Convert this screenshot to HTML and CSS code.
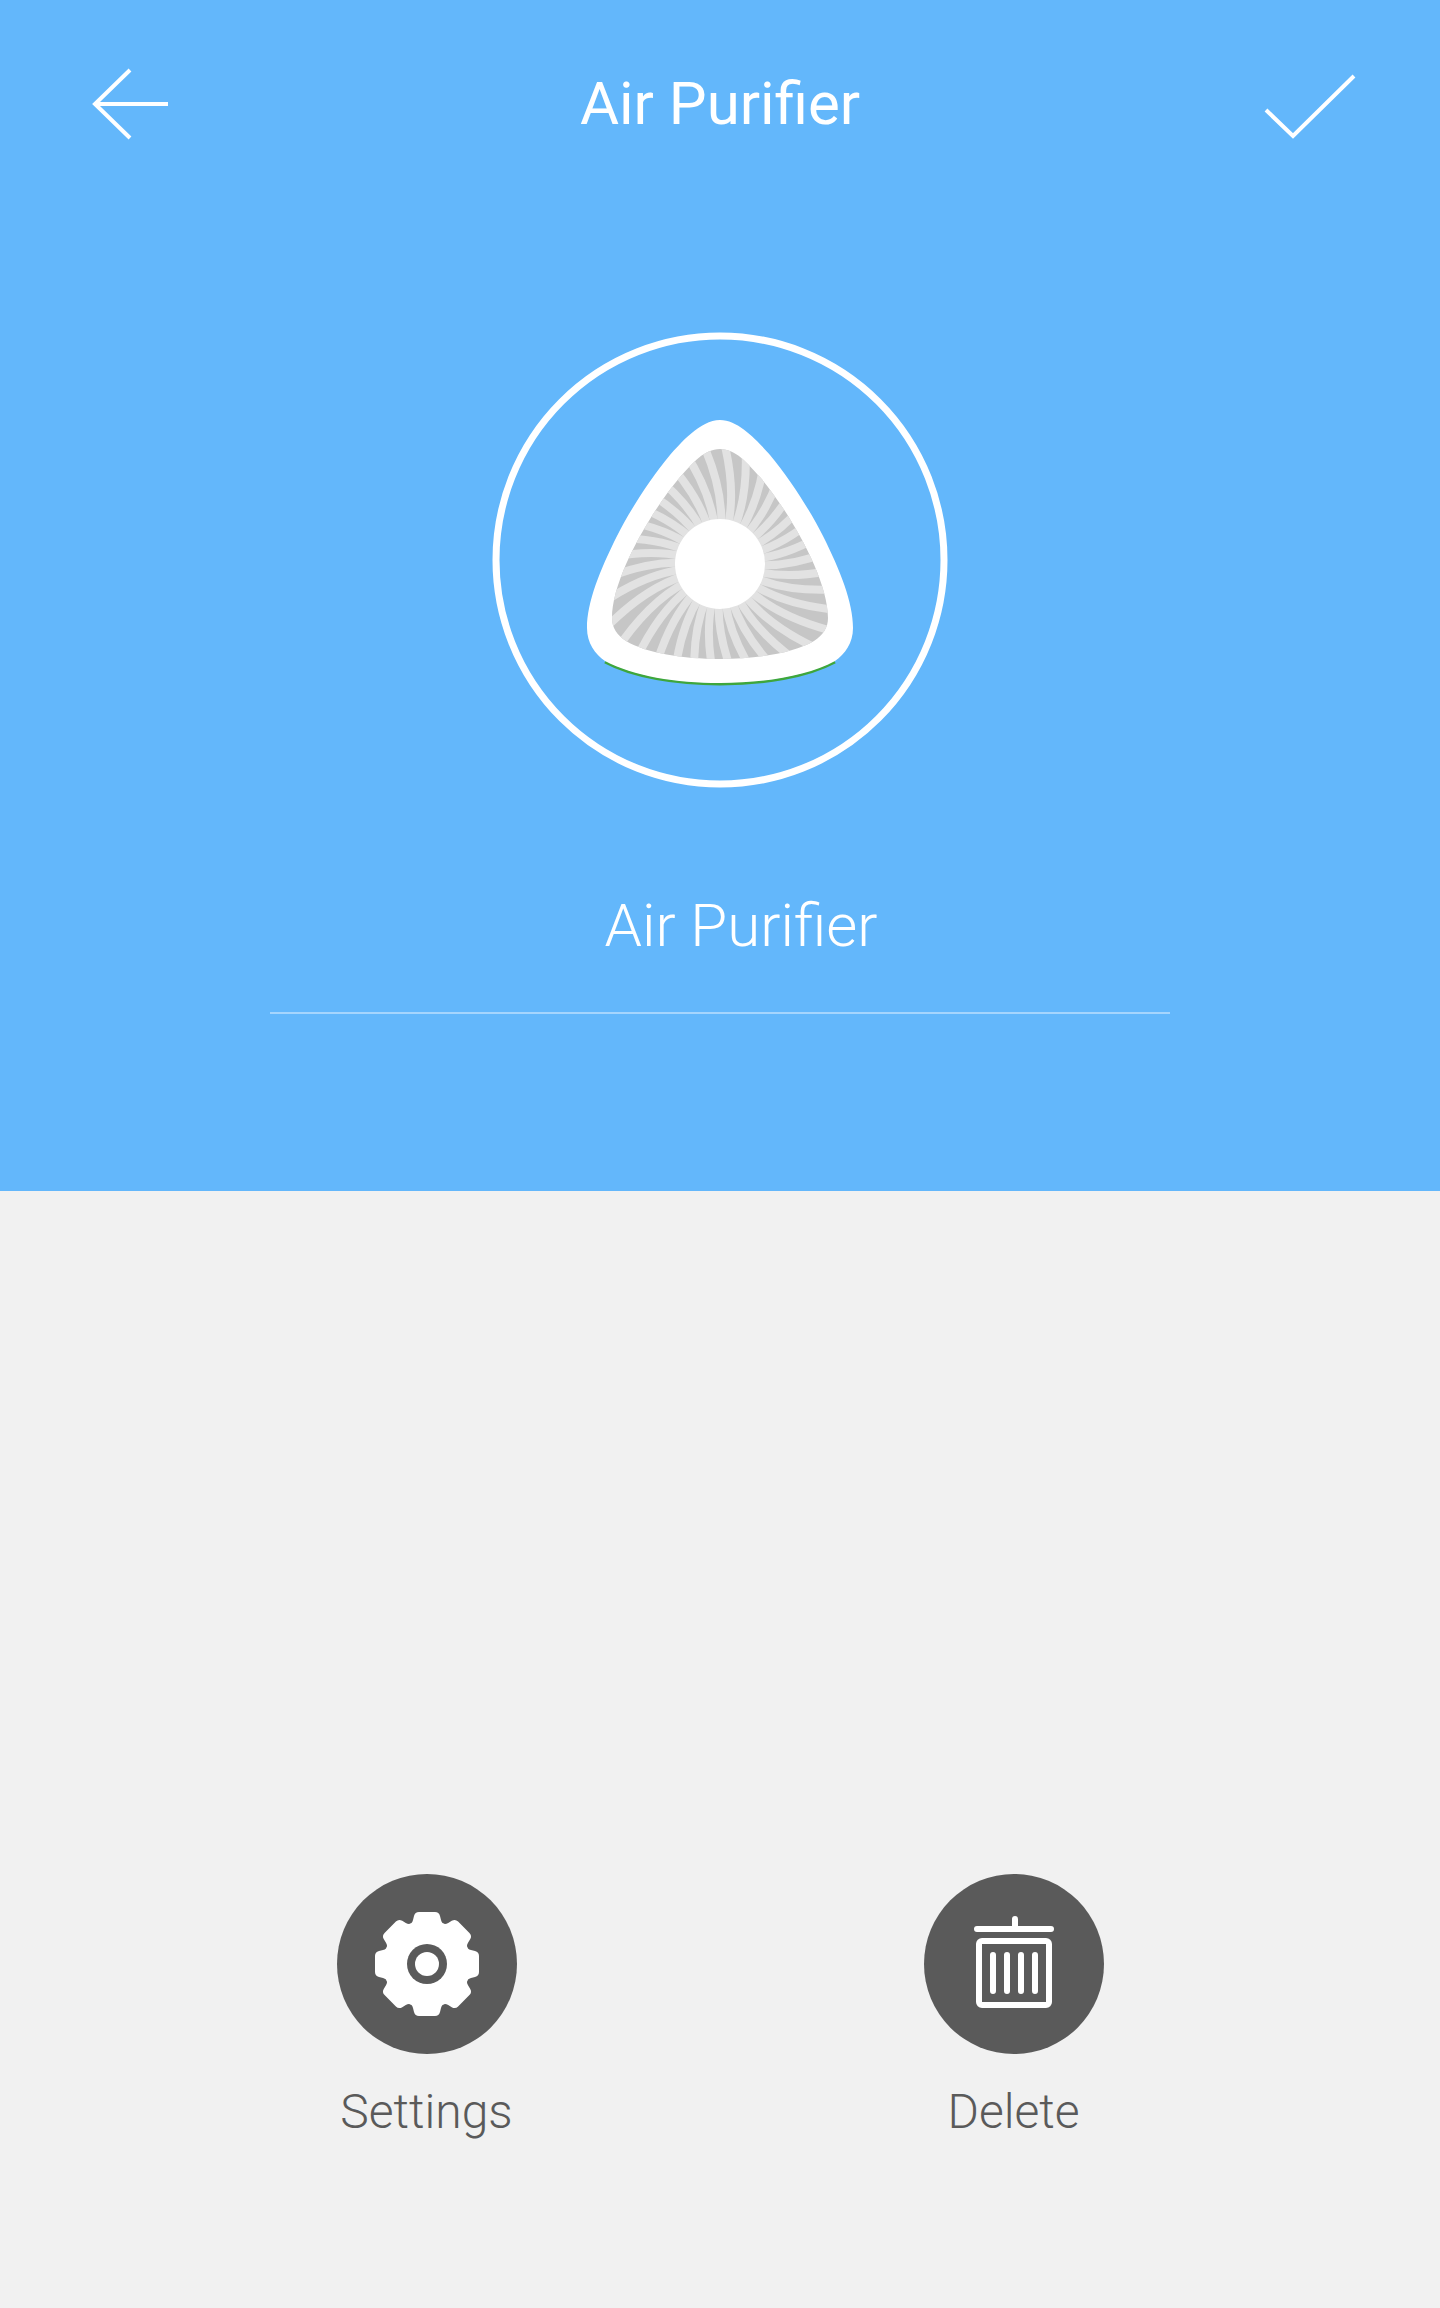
FILE: index.html
```
<!DOCTYPE html>
<html lang="en">
<head>
  <meta charset="UTF-8">
  <meta name="viewport" content="width=device-width, initial-scale=1.0">
  <title>Air Purifier</title>
  <link rel="stylesheet" href="styles.css">
</head>
<body>
  <section class="device">
    <header class="topbar">
      <button class="icon-button" type="button" aria-label="Back">
        <svg width="80" height="80" viewBox="0 0 80 80">
          <path d="M40 6 L5 40 L40 74 M5 40 H78" />
        </svg>
      </button>
      <h1>Air Purifier</h1>
      <button class="icon-button" type="button" aria-label="Save">
        <svg width="96" height="80" viewBox="0 0 96 80">
          <path d="M12 46 L39 72 L100 12" />
        </svg>
      </button>
    </header>

    <svg class="device-picture" viewBox="0 0 456 456" aria-hidden="true">
      <defs>
        <clipPath id="grille">
          <path d="M228 117 C244 117 255 131 268 145 C296 178 336 245 336 286 C336 296 331 303 322 309 C302 321 265 327 228 327 C191 327 154 321 134 309 C125 303 120 296 120 286 C120 245 160 178 188 145 C201 131 212 117 228 117 Z" />
        </clipPath>
        <path id="blade" d="M8 -38 Q17 -80 0 -137" />
        <g id="blades">
          <use href="#blade" />
          <use href="#blade" transform="rotate(10)" />
          <use href="#blade" transform="rotate(20)" />
          <use href="#blade" transform="rotate(30)" />
          <use href="#blade" transform="rotate(40)" />
          <use href="#blade" transform="rotate(50)" />
        </g>
      </defs>
      <circle class="ring" cx="228" cy="228" r="224" />
      <path class="glow" d="M113 330 C141 345 184 352 228 352 C272 352 315 345 343 330" />
      <path class="shell" d="M228 88 C248 88 268 112 278 123 C298 147 319 180 331 204 C348 238 361 270 361 296 C361 311 353 322 343 329 C315 344 272 351 228 351 C184 351 141 344 113 329 C103 322 95 311 95 296 C95 270 108 238 125 204 C137 180 158 147 178 123 C188 112 208 88 228 88 Z" />
      <g clip-path="url(#grille)">
        <rect class="grille" x="110" y="110" width="236" height="226" />
        <g class="blades" transform="translate(228 232)">
          <use href="#blades" />
          <use href="#blades" transform="rotate(60)" />
          <use href="#blades" transform="rotate(120)" />
          <use href="#blades" transform="rotate(180)" />
          <use href="#blades" transform="rotate(240)" />
          <use href="#blades" transform="rotate(300)" />
        </g>
      </g>
      <circle class="shell" cx="228" cy="232" r="45" />
    </svg>

    <input class="device-name" type="text" value="Air Purifier" aria-label="Device name">
  </section>

  <nav class="actions">
    <button class="action" type="button">
      <svg width="180" height="180" viewBox="-90 -90 180 180" aria-hidden="true">
        <defs>
          <path id="tooth" d="M0 0 L-18 -40 Q-15 -40 -14 -44 L-13 -48 Q-12 -52 -8 -52 H8 Q12 -52 13 -48 L14 -44 Q15 -40 18 -40 Z" />
        </defs>
        <circle class="disc" r="90" />
        <g class="solid">
          <circle r="42" />
          <use href="#tooth" />
          <use href="#tooth" transform="rotate(45)" />
          <use href="#tooth" transform="rotate(90)" />
          <use href="#tooth" transform="rotate(135)" />
          <use href="#tooth" transform="rotate(180)" />
          <use href="#tooth" transform="rotate(225)" />
          <use href="#tooth" transform="rotate(270)" />
          <use href="#tooth" transform="rotate(315)" />
        </g>
        <circle class="disc" r="20" />
        <circle class="solid" r="12" />
      </svg>
      <span>Settings</span>
    </button>
    <button class="action" type="button">
      <svg width="180" height="180" viewBox="-90 -90 180 180" aria-hidden="true">
        <circle class="disc" r="90" />
        <g class="lines">
          <path d="M-37 -35 H37 M1 -45 V-35" />
          <rect x="-35" y="-23" width="70" height="64" rx="3" />
          <path d="M-21 -9 V27 M-7 -9 V27 M7 -9 V27 M21 -9 V27" />
        </g>
      </svg>
      <span>Delete</span>
    </button>
  </nav>
</body>
</html>
```

FILE: styles.css
```
* {
  margin: 0;
  padding: 0;
  box-sizing: border-box;
}

body {
  background: #f1f1f1;
  color: #5a5a5a;
  font-family: Roboto, sans-serif;
  min-height: 100vh;
  display: flex;
  flex-direction: column;
  justify-content: space-between;
}

button {
  background: none;
  border: none;
  color: inherit;
  font: inherit;
  cursor: pointer;
}

svg {
  display: block;
  overflow: visible;
}

/* Blue device panel */
.device {
  background: #63b7fb;
  color: #ffffff;
  display: flex;
  flex-direction: column;
  align-items: center;
  padding-bottom: 177px;
}

.topbar {
  width: 100%;
  height: 208px;
  padding: 0 90px;
  display: grid;
  grid-template-columns: 1fr auto 1fr;
  align-items: center;
}

.topbar h1 {
  font-size: 60px;
  line-height: 70px;
  font-weight: 400;
}

.icon-button {
  justify-self: start;
}

.icon-button:last-child {
  justify-self: end;
}

.icon-button path {
  fill: none;
  stroke: #ffffff;
  stroke-width: 4;
}

.device-picture {
  width: 456px;
  height: 456px;
  margin: 124px 0 50px;
}

.ring {
  fill: none;
  stroke: #ffffff;
  stroke-width: 7;
}

.shell {
  fill: #ffffff;
}

.glow {
  fill: none;
  stroke: #3ea63c;
  stroke-width: 3;
}

.grille {
  fill: #c6c6c6;
}

.blades {
  fill: none;
  stroke: #e2e2e2;
  stroke-width: 8;
}

.device-name {
  width: 62.5%;
  height: 176px;
  padding-left: 42px;
  background: none;
  border: none;
  border-bottom: 2px solid #a5d5fd;
  border-radius: 0;
  outline: none;
  color: #ffffff;
  font-family: inherit;
  font-size: 60px;
  font-weight: 300;
  text-align: center;
}

/* Bottom actions */
.actions {
  display: grid;
  grid-template-columns: 1fr 1fr;
  padding: 0 133px 168px;
}

.action {
  display: flex;
  flex-direction: column;
  align-items: center;
  gap: 30px;
  font-size: 48px;
  line-height: 56px;
  font-weight: 300;
}

.disc {
  fill: #5a5a5a;
}

.solid {
  fill: #ffffff;
}

.lines {
  fill: none;
  stroke: #ffffff;
  stroke-width: 6;
  stroke-linecap: round;
}
```
